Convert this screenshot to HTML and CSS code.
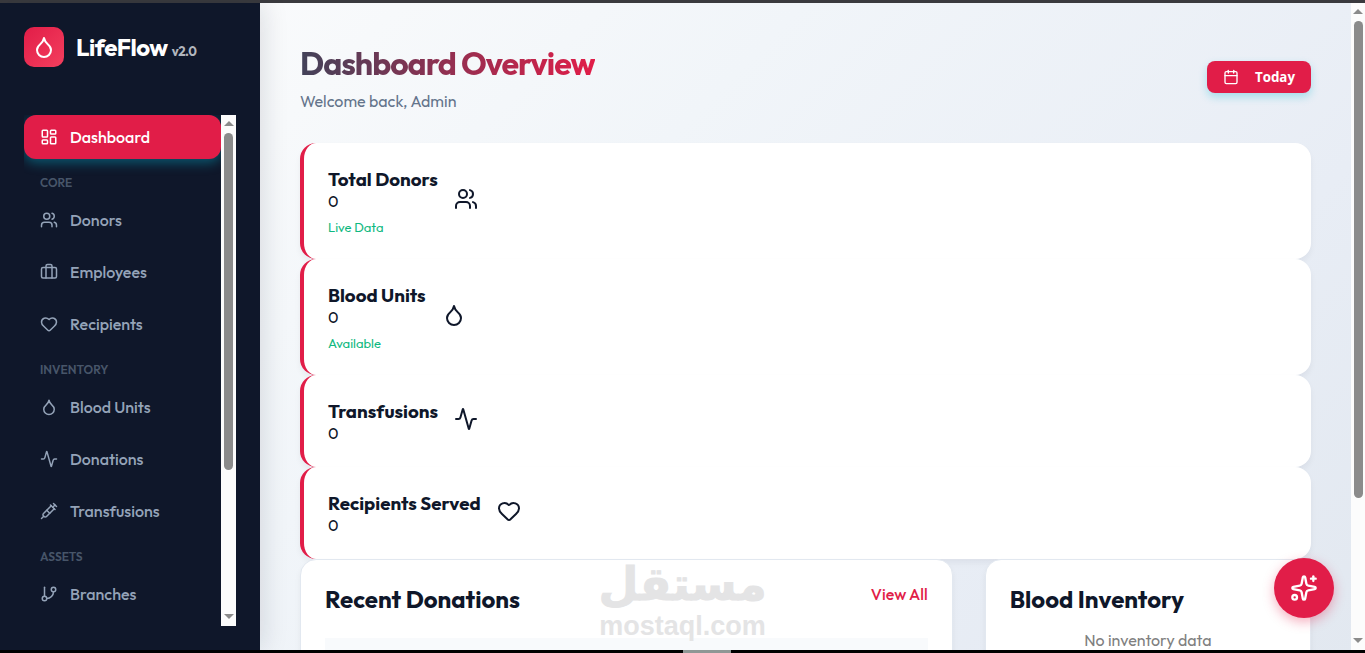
FILE: index.html
```html
<!DOCTYPE html>
<html lang="en">
<head>
    <meta charset="UTF-8">
    <meta name="viewport" content="width=device-width, initial-scale=1.0">
    <title>LifeFlow - Dashboard</title>
    <link rel="stylesheet" href="styles.css">
</head>
<body>
    <!-- Icon set -->
    <svg class="icon-defs" aria-hidden="true">
        <symbol id="i-dashboard" viewBox="0 0 24 24">
            <rect x="3" y="3" width="7" height="9" rx="1"/><rect x="14" y="3" width="7" height="5" rx="1"/>
            <rect x="14" y="12" width="7" height="9" rx="1"/><rect x="3" y="16" width="7" height="5" rx="1"/>
        </symbol>
        <symbol id="i-users" viewBox="0 0 24 24">
            <path d="M16 21v-2a4 4 0 0 0-4-4H6a4 4 0 0 0-4 4v2"/><circle cx="9" cy="7" r="4"/>
            <path d="M22 21v-2a4 4 0 0 0-3-3.87"/><path d="M16 3.13a4 4 0 0 1 0 7.75"/>
        </symbol>
        <symbol id="i-briefcase" viewBox="0 0 24 24">
            <path d="M16 20V4a2 2 0 0 0-2-2h-4a2 2 0 0 0-2 2v16"/><rect x="2" y="6" width="20" height="14" rx="2"/>
        </symbol>
        <symbol id="i-heart" viewBox="0 0 24 24">
            <path d="M2 9.5a5.5 5.5 0 0 1 9.591-3.676.56.56 0 0 0 .818 0A5.49 5.49 0 0 1 22 9.5c0 2.29-1.5 4-3 5.5l-5.492 5.313a2 2 0 0 1-3 .019L5 15c-1.5-1.5-3-3.2-3-5.5"/>
        </symbol>
        <symbol id="i-droplet" viewBox="0 0 24 24">
            <path d="M12 22a7 7 0 0 0 7-7c0-2-1-3.9-3-5.5s-3.5-4-4-6.5c-.5 2.5-2 4.9-4 6.5C6 11.1 5 13 5 15a7 7 0 0 0 7 7z"/>
        </symbol>
        <symbol id="i-activity" viewBox="0 0 24 24">
            <path d="M22 12h-2.48a2 2 0 0 0-1.93 1.46l-2.35 8.36a.25.25 0 0 1-.48 0L9.24 2.18a.25.25 0 0 0-.48 0l-2.35 8.36A2 2 0 0 1 4.49 12H2"/>
        </symbol>
        <symbol id="i-syringe" viewBox="0 0 24 24">
            <path d="m18 2 4 4"/><path d="m17 7 3-3"/><path d="M19 9 8.7 19.3c-1 1-2.5 1-3.4 0l-.6-.6c-1-1-1-2.5 0-3.4L15 5"/>
            <path d="m9 11 4 4"/><path d="m5 19-3 3"/><path d="m14 4 6 6"/>
        </symbol>
        <symbol id="i-branch" viewBox="0 0 24 24">
            <path d="M6 3v12"/><circle cx="18" cy="6" r="3"/><circle cx="6" cy="18" r="3"/><path d="M18 9a9 9 0 0 1-9 9"/>
        </symbol>
        <symbol id="i-calendar" viewBox="0 0 24 24">
            <path d="M8 2v4"/><path d="M16 2v4"/><rect x="3" y="4" width="18" height="18" rx="2"/><path d="M3 10h18"/>
        </symbol>
        <symbol id="i-sparkles" viewBox="0 0 24 24">
            <path d="M11.017 2.814a1 1 0 0 1 1.966 0l1.051 5.558a2 2 0 0 0 1.594 1.594l5.558 1.051a1 1 0 0 1 0 1.966l-5.558 1.051a2 2 0 0 0-1.594 1.594l-1.051 5.558a1 1 0 0 1-1.966 0l-1.051-5.558a2 2 0 0 0-1.594-1.594l-5.558-1.051a1 1 0 0 1 0-1.966l5.558-1.051a2 2 0 0 0 1.594-1.594z"/>
            <path d="M20 2v4"/><path d="M22 4h-4"/><circle cx="4" cy="20" r="2"/>
        </symbol>
    </svg>

    <div class="window-edge"></div>

    <div class="app">
        <aside class="sidebar">
            <div class="brand">
                <div class="brand-icon"><svg class="icon"><use href="#i-droplet"/></svg></div>
                <div class="brand-name">LifeFlow <span class="version">v2.0</span></div>
            </div>

            <div class="nav-wrap">
                <nav class="nav">
                    <a href="#" class="nav-item active"><svg class="icon"><use href="#i-dashboard"/></svg>Dashboard</a>
                    <div class="nav-label">CORE</div>
                    <a href="#" class="nav-item"><svg class="icon"><use href="#i-users"/></svg>Donors</a>
                    <a href="#" class="nav-item"><svg class="icon"><use href="#i-briefcase"/></svg>Employees</a>
                    <a href="#" class="nav-item"><svg class="icon"><use href="#i-heart"/></svg>Recipients</a>
                    <div class="nav-label">INVENTORY</div>
                    <a href="#" class="nav-item"><svg class="icon"><use href="#i-droplet"/></svg>Blood Units</a>
                    <a href="#" class="nav-item"><svg class="icon"><use href="#i-activity"/></svg>Donations</a>
                    <a href="#" class="nav-item"><svg class="icon"><use href="#i-syringe"/></svg>Transfusions</a>
                    <div class="nav-label">ASSETS</div>
                    <a href="#" class="nav-item"><svg class="icon"><use href="#i-branch"/></svg>Branches</a>
                </nav>
                <div class="scrollbar">
                    <span class="arrow up"></span>
                    <div class="track"><div class="thumb thumb-nav"></div></div>
                    <span class="arrow down"></span>
                </div>
            </div>
        </aside>

        <main class="main">
            <header class="page-header">
                <div>
                    <h1>Dashboard Overview</h1>
                    <p class="subtitle">Welcome back, Admin</p>
                </div>
                <button type="button" class="btn-today"><svg class="icon"><use href="#i-calendar"/></svg>Today</button>
            </header>

            <section class="stats">
                <div class="stat-card">
                    <div>
                        <h3>Total Donors</h3>
                        <p class="stat-value">0</p>
                        <p class="stat-note">Live Data</p>
                    </div>
                    <div class="stat-icon"><svg class="icon"><use href="#i-users"/></svg></div>
                </div>
                <div class="stat-card">
                    <div>
                        <h3>Blood Units</h3>
                        <p class="stat-value">0</p>
                        <p class="stat-note">Available</p>
                    </div>
                    <div class="stat-icon"><svg class="icon"><use href="#i-droplet"/></svg></div>
                </div>
                <div class="stat-card">
                    <div>
                        <h3>Transfusions</h3>
                        <p class="stat-value">0</p>
                    </div>
                    <div class="stat-icon"><svg class="icon"><use href="#i-activity"/></svg></div>
                </div>
                <div class="stat-card">
                    <div>
                        <h3>Recipients Served</h3>
                        <p class="stat-value">0</p>
                    </div>
                    <div class="stat-icon"><svg class="icon"><use href="#i-heart"/></svg></div>
                </div>
            </section>

            <section class="panels">
                <div class="panel">
                    <div class="panel-header">
                        <h2>Recent Donations</h2>
                        <a href="#" class="view-all">View All</a>
                    </div>
                    <div class="table-head"></div>
                </div>
                <div class="panel">
                    <h2>Blood Inventory</h2>
                    <p class="empty">No inventory data</p>
                </div>
            </section>
        </main>

        <div class="scrollbar page-scrollbar">
            <span class="arrow up"></span>
            <div class="track"><div class="thumb thumb-page"></div></div>
            <span class="arrow down"></span>
        </div>

        <div class="watermark">
            <span class="watermark-ar" lang="ar" dir="rtl">مستقل</span>
            <span class="watermark-en">mostaql.com</span>
        </div>

        <button type="button" class="fab" aria-label="Assistant"><svg class="icon"><use href="#i-sparkles"/></svg></button>
    </div>

    <div class="taskbar"><span class="handle"></span></div>
</body>
</html>
```
FILE: styles.css
```css
:root {
    --primary: #e11d48;
    --dark: #0f172a;
    --muted: #64748b;
    --nav-text: #94a3b8;
    --success: #10b981;
    --border: #e2e8f0;
}

* {
    margin: 0;
    padding: 0;
    box-sizing: border-box;
}

body {
    display: flex;
    flex-direction: column;
    height: 100vh;
    overflow: hidden;
    font-family: Outfit, Lato, sans-serif;
    font-size: 16px;
    line-height: 20px;
    color: var(--dark);
}

a {
    text-decoration: none;
}

.icon-defs {
    position: absolute;
    width: 0;
    height: 0;
}

.icon {
    display: block;
    flex-shrink: 0;
    width: 24px;
    height: 24px;
    fill: none;
    stroke: currentColor;
    stroke-width: 2;
    stroke-linecap: round;
    stroke-linejoin: round;
}

.window-edge {
    flex: 0 0 3px;
    background: #3a3a3e;
}

.app {
    position: relative;
    display: flex;
    flex: 1;
    min-height: 0;
    background: linear-gradient(135deg, #fdfdfd 0%, #f1f5f9 40%, #e8edf5 75%, #e2e8f0 100%);
}

/* Sidebar */
.sidebar {
    display: flex;
    flex-direction: column;
    flex: 0 0 260px;
    padding: 24px;
    background: var(--dark);
    box-shadow: 4px 0 24px rgba(15, 23, 42, 0.12);
}

.brand {
    display: flex;
    align-items: center;
    gap: 12px;
    margin-bottom: 48px;
}

.brand-icon {
    display: flex;
    align-items: center;
    justify-content: center;
    width: 40px;
    height: 40px;
    border-radius: 10px;
    background: linear-gradient(135deg, var(--primary), #f43f5e);
    color: #fff;
}

.brand-name {
    display: flex;
    align-items: baseline;
    gap: 4px;
    font-size: 24px;
    line-height: 30px;
    font-weight: 700;
    letter-spacing: -0.5px;
    color: #fff;
}

.version {
    font-size: 13px;
    line-height: 16px;
    color: #b2b6be;
}

.nav-wrap {
    display: flex;
    flex: 1;
    min-height: 0;
}

.nav {
    flex: 1;
    overflow: hidden;
}

.nav-item {
    display: flex;
    align-items: center;
    gap: 12px;
    height: 44px;
    margin-bottom: 8px;
    padding: 0 16px;
    border-radius: 12px;
    font-weight: 500;
    color: var(--nav-text);
}

.nav-item .icon {
    width: 18px;
    height: 18px;
}

.nav-item.active {
    background: var(--primary);
    color: #fff;
    box-shadow: 0 4px 12px rgba(6, 182, 212, 0.4);
}

.nav-label {
    padding: 8px 16px;
    font-size: 12px;
    line-height: 15px;
    font-weight: 600;
    color: #475569;
}

/* Scrollbars */
.scrollbar {
    display: flex;
    flex-direction: column;
    flex: 0 0 15px;
    align-items: center;
    background: #fcfcfc;
}

.page-scrollbar {
    flex-basis: 14px;
}

.track {
    flex: 1;
    width: 9px;
}

.thumb {
    border-radius: 5px;
    background: #8b8b8b;
}

.thumb-nav {
    height: 71%;
}

.thumb-page {
    height: 78%;
}

.arrow {
    border: 5px solid transparent;
}

.arrow.up {
    height: 11px;
    margin-bottom: 7px;
    border-top-width: 6px;
    border-bottom-color: #8b8b8b;
}

.arrow.down {
    height: 10px;
    margin-top: 6px;
    margin-bottom: 2px;
    border-top-color: #8b8b8b;
}

/* Content */
.main {
    flex: 1;
    min-width: 0;
    padding: 40px;
    overflow: hidden;
}

.page-header {
    display: flex;
    align-items: center;
    justify-content: space-between;
    margin-bottom: 32px;
}

h1 {
    margin-bottom: 8px;
    font-size: 32px;
    line-height: 40px;
    font-weight: 700;
    letter-spacing: -1px;
    background: linear-gradient(to right, #424259, var(--primary));
    -webkit-background-clip: text;
    background-clip: text;
    color: transparent;
}

.subtitle {
    color: var(--muted);
}

.btn-today {
    display: flex;
    align-items: center;
    gap: 16px;
    height: 32px;
    padding: 0 16px;
    border: none;
    border-radius: 8px;
    background: var(--primary);
    color: #fff;
    font-family: "Open Sans", sans-serif;
    font-weight: 700;
    box-shadow: 0 4px 8px rgba(6, 182, 212, 0.3);
    cursor: pointer;
}

.btn-today .icon {
    width: 16px;
    height: 16px;
}

.stat-card {
    display: flex;
    align-items: center;
    gap: 16px;
    padding: 24px;
    border-left: 4px solid var(--primary);
    border-radius: 16px;
    background: #fff;
    box-shadow: 0 4px 6px rgba(15, 23, 42, 0.05);
}

h3 {
    line-height: 24px;
}

.stat-note {
    margin-top: 8px;
    font-size: 13px;
    line-height: 16px;
    color: var(--success);
}

.stat-icon {
    padding-bottom: 4px;
}

.panels {
    display: grid;
    grid-template-columns: 2fr 1fr;
    gap: 32px;
}

.panel {
    min-height: 320px;
    padding: 24px;
    border: 1px solid var(--border);
    border-radius: 16px;
    background: #fff;
    box-shadow: 0 4px 6px rgba(15, 23, 42, 0.05);
}

.panel-header {
    display: flex;
    align-items: flex-start;
    justify-content: space-between;
    margin-bottom: 24px;
}

h2 {
    font-size: 24px;
    line-height: 30px;
}

.view-all {
    font-weight: 500;
    color: var(--primary);
}

.table-head {
    height: 48px;
    background: #f8fafc;
}

.empty {
    margin-top: 16px;
    text-align: center;
    color: #808080;
}

.fab {
    position: absolute;
    right: 31px;
    bottom: 32px;
    display: flex;
    align-items: center;
    justify-content: center;
    width: 60px;
    height: 60px;
    border: none;
    border-radius: 50%;
    background: var(--primary);
    color: #fff;
    box-shadow: 0 4px 12px rgba(225, 29, 72, 0.35);
    cursor: pointer;
}

.fab .icon {
    width: 28px;
    height: 28px;
}

/* Watermark over the page */
.watermark {
    position: absolute;
    left: 50%;
    bottom: 8px;
    display: flex;
    flex-direction: column;
    align-items: center;
    transform: translateX(-50%);
    font-weight: 700;
    color: #e4e4e5;
    pointer-events: none;
}

.watermark-ar {
    font-family: "DejaVu Sans", sans-serif;
    font-size: 46px;
    line-height: 52px;
    -webkit-text-stroke: 1px #e4e4e5;
}

.watermark-en {
    font-family: "Liberation Sans", sans-serif;
    font-size: 27px;
    line-height: 32px;
}

.taskbar {
    flex: 0 0 3px;
    background: #000;
}

.handle {
    display: block;
    width: 48px;
    height: 3px;
    margin-left: 50%;
    background: #8f9795;
}
```
